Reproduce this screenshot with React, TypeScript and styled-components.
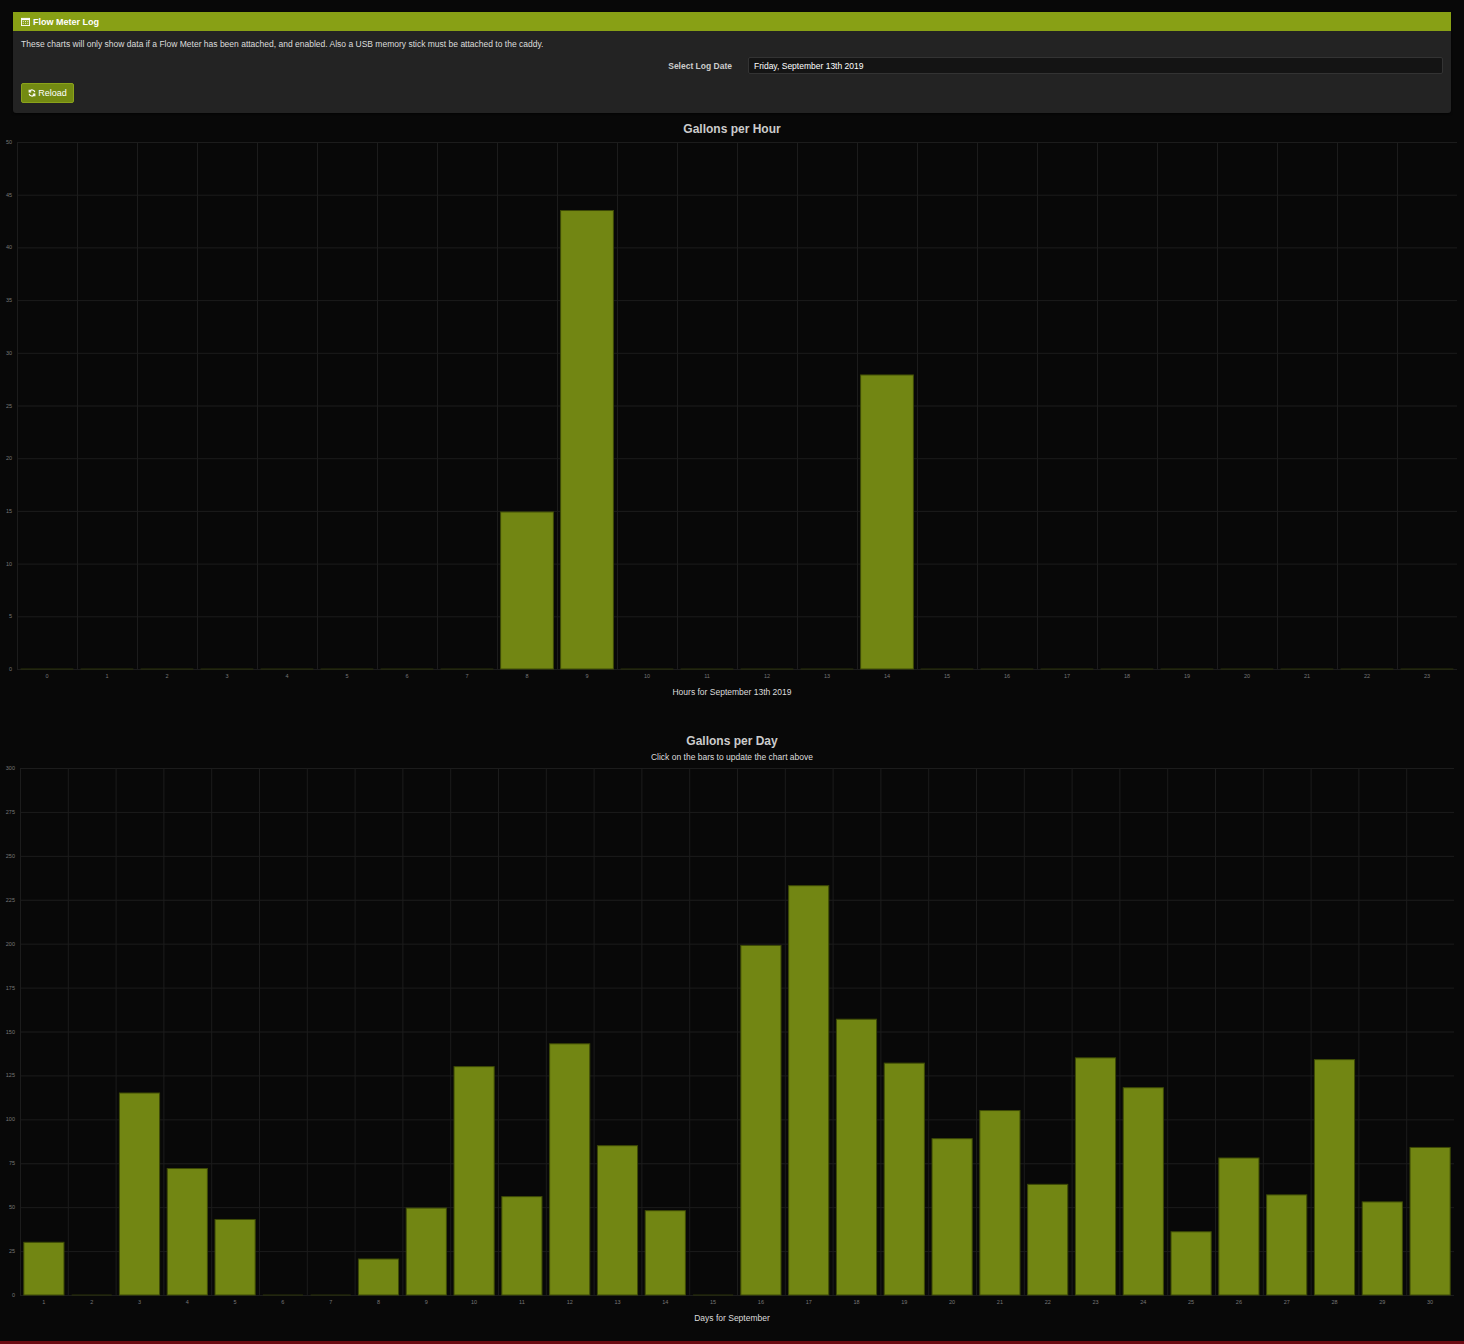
import React from "react";
import styled, { createGlobalStyle } from "styled-components";

const Global = createGlobalStyle`
  html, body { margin: 0; padding: 0; background: #080808; }
  body { font-family: "Liberation Sans", Arial, sans-serif; color: #ccc; }
`;

const Page = styled.div`
  width: 1464px; min-height: 1344px; box-sizing: border-box; padding-top: 12px;
  display: flex; flex-direction: column; border-bottom: 3px solid #6b0a12;
`;
const Panel = styled.div`
  margin: 0 13px; background: #232323; border-radius: 0 0 3px 3px; padding-bottom: 10px;
  box-shadow: 0 1px 2px rgba(0,0,0,.6);
`;
const PanelHead = styled.div`
  background: #88a015; height: 19px; display: flex; align-items: center; gap: 3px;
  padding: 0 8px; color: #fff; font-size: 9px; font-weight: bold;
`;
const Note = styled.div`
  font-size: 8.5px; color: #ddd; padding: 8px 8px 0;
`;
const DateRow = styled.div`
  display: flex; align-items: center; justify-content: flex-end; padding: 8px 8px 0; gap: 16px;
`;
const Label = styled.div` font-size: 8.5px; font-weight: bold; color: #ccc; `;
const Input = styled.div`
  width: 695px; height: 17px; background: #141414; border: 1px solid #333; border-radius: 2px;
  font-size: 8.5px; color: #fff; display: flex; align-items: center; padding-left: 5px; box-sizing: border-box;
`;
const Button = styled.button`
  margin: 9px 0 0 8px; height: 20px; width: 53px; background: #738a12; border: 1px solid #8aa31a;
  border-radius: 2px; color: #fff; font-size: 9px; font-family: inherit; display: flex; align-items: center;
  justify-content: center; gap: 2px; padding: 0;
`;
const ChartTitle = styled.div<{ $top: number }>`
  text-align: center; font-size: 12px; font-weight: bold; color: #ccc; margin-top: ${p => p.$top}px;
`;
const Sub = styled.div` text-align: center; font-size: 8.5px; color: #ddd; margin-top: 4px; `;
const AxisTitle = styled.div` text-align: center; font-size: 8.5px; color: #ddd; margin-top: 2px; `;

type ChartProps = { values: number[]; labels: string[]; max: number; step: number; x0: number; x1: number; barFrac: number; h: number };
function Chart({ values, labels, max, step, x0, x1, barFrac, h }: ChartProps) {
  const top = 6, plotH = h;
  const n = values.length, cw = (x1 - x0) / n;
  const ticks: number[] = [];
  for (let v = 0; v <= max; v += step) ticks.push(v);
  const y = (v: number) => top + plotH - (v / max) * plotH;
  return (
    <svg width={1464} height={top + plotH + 16} style={{ display: "block" }}>
      {ticks.map(t => (
        <g key={t}>
          <line x1={x0} x2={x1} y1={y(t) + 0.5} y2={y(t) + 0.5} stroke="#1c1c1c" />
          <text x={x0 - 5} y={y(t) + 2} fontSize={5.5} fill="#777" textAnchor="end">{t}</text>
        </g>
      ))}
      {values.map((_, i) => (
        <line key={i} x1={x0 + cw * i + 0.5} x2={x0 + cw * i + 0.5} y1={top} y2={top + plotH} stroke="#1c1c1c" />
      ))}
      {values.map((v, i) => {
        const bw = cw * barFrac, bx = x0 + cw * i + (cw - bw) / 2;
        return (
          <g key={i}>
            {v > 0 && <rect x={bx} y={y(v)} width={bw} height={y(0) - y(v)} fill="#728613" stroke="#3d4a06" strokeWidth={1} />}
            {v === 0 && <line x1={bx} x2={bx + bw} y1={y(0)} y2={y(0)} stroke="#2a3208" />}
            <text x={bx + bw / 2} y={top + plotH + 9} fontSize={5.5} fill="#777" textAnchor="middle">{labels[i]}</text>
          </g>
        );
      })}
    </svg>
  );
}

const hours = Array.from({ length: 24 }, (_, i) => (i === 8 ? 14.9 : i === 9 ? 43.5 : i === 14 ? 27.9 : 0));
const days = [30, 0, 115, 72, 43, 0, 0, 20.5, 49.5, 130, 56, 143, 85, 48, 0, 199, 233, 157, 132, 89, 105, 63, 135, 118, 36, 78, 57, 134, 53, 84];

export default function App() {
  return (
    <Page>
      <Global />
      <Panel>
        <PanelHead>
          <svg width="9" height="9" viewBox="0 0 10 10"><rect x="0.5" y="1.5" width="9" height="8" fill="none" stroke="#fff" /><rect x="0.5" y="1.5" width="9" height="2" fill="#fff" /><path d="M2 5h1M4.5 5h1M7 5h1M2 7h1M4.5 7h1M7 7h1" stroke="#fff" /></svg>
          Flow Meter Log
        </PanelHead>
        <Note>These charts will only show data if a Flow Meter has been attached, and enabled. Also a USB memory stick must be attached to the caddy.</Note>
        <DateRow>
          <Label>Select Log Date</Label>
          <Input>Friday, September 13th 2019</Input>
        </DateRow>
        <Button>
          <svg width="8" height="8" viewBox="0 0 10 10" fill="none" stroke="#fff" strokeWidth="1.5"><path d="M8.5 4A3.5 3.5 0 0 0 2 3M1.5 6A3.5 3.5 0 0 0 8 7" /><path d="M1.5 1v2.5H4M8.5 9V6.5H6" /></svg>
          Reload
        </Button>
      </Panel>
      <ChartTitle $top={9}>Gallons per Hour</ChartTitle>
      <Chart values={hours} labels={hours.map((_, i) => String(i))} max={50} step={5} x0={17} x1={1457} barFrac={0.88} h={527} />
      <AxisTitle>Hours for September 13th 2019</AxisTitle>
      <ChartTitle $top={37}>Gallons per Day</ChartTitle>
      <Sub>Click on the bars to update the chart above</Sub>
      <Chart values={days} labels={days.map((_, i) => String(i + 1))} max={300} step={25} x0={20} x1={1454} barFrac={0.84} h={527} />
      <AxisTitle>Days for September</AxisTitle>
    </Page>
  );
}
